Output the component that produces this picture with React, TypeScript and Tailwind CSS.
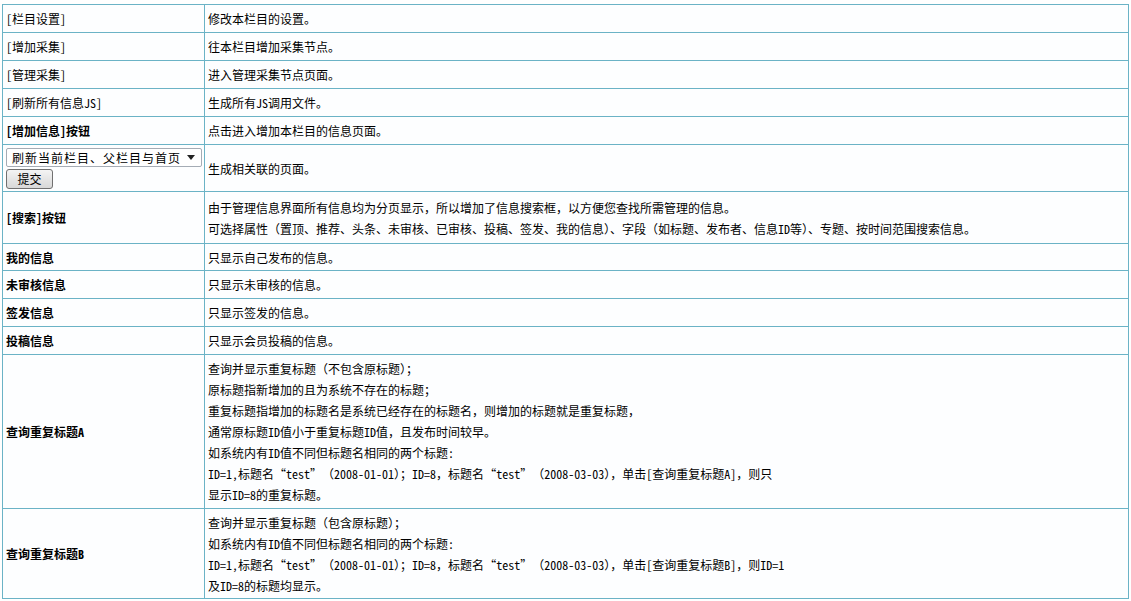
import React from 'react';

type Row = {
  label: string;
  bold?: boolean;
  lines: string[];
  h: string;
};

const rows: Row[] = [
  { label: '[栏目设置]', lines: ['修改本栏目的设置。'], h: 'h-[28px]' },
  { label: '[增加采集]', lines: ['往本栏目增加采集节点。'], h: 'h-[28px]' },
  { label: '[管理采集]', lines: ['进入管理采集节点页面。'], h: 'h-[28px]' },
  { label: '[刷新所有信息JS]', lines: ['生成所有JS调用文件。'], h: 'h-[28px]' },
  { label: '[增加信息]按钮', bold: true, lines: ['点击进入增加本栏目的信息页面。'], h: 'h-[28px]' },
];

const rows2: Row[] = [
  {
    label: '[搜索]按钮',
    bold: true,
    lines: [
      '由于管理信息界面所有信息均为分页显示，所以增加了信息搜索框，以方便您查找所需管理的信息。',
      '可选择属性（置顶、推荐、头条、未审核、已审核、投稿、签发、我的信息）、字段（如标题、发布者、信息ID等）、专题、按时间范围搜索信息。',
    ],
    h: 'h-[52px]',
  },
  { label: '我的信息', bold: true, lines: ['只显示自己发布的信息。'], h: 'h-[27px]' },
  { label: '未审核信息', bold: true, lines: ['只显示未审核的信息。'], h: 'h-[28px]' },
  { label: '签发信息', bold: true, lines: ['只显示签发的信息。'], h: 'h-[28px]' },
  { label: '投稿信息', bold: true, lines: ['只显示会员投稿的信息。'], h: 'h-[28px]' },
  {
    label: '查询重复标题A',
    bold: true,
    lines: [
      '查询并显示重复标题（不包含原标题）；',
      '原标题指新增加的且为系统不存在的标题；',
      '重复标题指增加的标题名是系统已经存在的标题名，则增加的标题就是重复标题，',
      '通常原标题ID值小于重复标题ID值，且发布时间较早。',
      '如系统内有ID值不同但标题名相同的两个标题:',
      'ID=1,标题名“test”（2008-01-01）；ID=8，标题名“test”（2008-03-03），单击[查询重复标题A]，则只',
      '显示ID=8的重复标题。',
    ],
    h: 'h-[154px]',
  },
  {
    label: '查询重复标题B',
    bold: true,
    lines: [
      '查询并显示重复标题（包含原标题）；',
      '如系统内有ID值不同但标题名相同的两个标题:',
      'ID=1,标题名“test”（2008-01-01）；ID=8，标题名“test”（2008-03-03），单击[查询重复标题B]，则ID=1',
      '及ID=8的标题均显示。',
    ],
    h: 'h-[90px]',
  },
];

const td = 'border border-[#6bb3c6] px-[3px] py-0 align-middle leading-[21px] bg-[#fdfeff]';

// ascii is half width and curly quotes full width, like the old song typeface
function Txt({ text }: { text: string }) {
  const parts = text.split(/([\x20-\x7e]+|[“”])/).filter(Boolean);
  return (
    <>
      {parts.map((p, i) => {
        if (p === '“' || p === '”')
          return (
            <span key={i} className="inline-block w-[12px] text-center">
              {p}
            </span>
          );
        if (/^[\x20-\x7e]+$/.test(p))
          return (
            <span key={i} className="[font-feature-settings:'hwid']">
              {p}
            </span>
          );
        return <React.Fragment key={i}>{p}</React.Fragment>;
      })}
    </>
  );
}

function TableRow({ row }: { row: Row }) {
  return (
    <tr className={row.h}>
      <td className={`${td} w-[202px] ${row.bold ? 'font-bold' : ''}`}>
        <Txt text={row.label} />
      </td>
      <td className={td}>
        {row.lines.map((l, i) => (
          <div key={i}>
            <Txt text={l} />
          </div>
        ))}
      </td>
    </tr>
  );
}

export default function App() {
  return (
    <div
      className="min-h-screen bg-white text-[12px] text-black pt-1 pl-0.5"
      style={{ fontFamily: '"Noto Sans CJK SC", "Liberation Sans", sans-serif' }}
    >
      <table className="w-[1127px] border-collapse table-fixed">
        <colgroup>
          <col className="w-[202px]" />
          <col />
        </colgroup>
        <tbody>
          {rows.map((r, i) => (
            <TableRow key={i} row={r} />
          ))}
          <tr className="h-[47px]">
            <td className={`${td} w-[202px]`}>
              <div className="flex flex-col gap-[2px] py-[1px]">
                <div className="w-[196px] h-[19px] border border-[#a5acb5] bg-white flex items-center justify-between pl-[5px] pr-[6px] rounded-[2px]">
                  <span className="leading-[17px] tracking-[1px]">刷新当前栏目、父栏目与首页</span>
                  <svg width="8" height="5" viewBox="0 0 8 5">
                    <path d="M0 0 L8 0 L4 5 Z" fill="#222" />
                  </svg>
                </div>
                <button className="w-[47px] h-[20px] border border-[#707070] rounded-[3px] bg-gradient-to-b from-[#f4f4f4] to-[#d8d8d8] text-[12px] leading-[18px] text-black">
                  提交
                </button>
              </div>
            </td>
            <td className={td}>生成相关联的页面。</td>
          </tr>
          {rows2.map((r, i) => (
            <TableRow key={i} row={r} />
          ))}
        </tbody>
      </table>
    </div>
  );
}
